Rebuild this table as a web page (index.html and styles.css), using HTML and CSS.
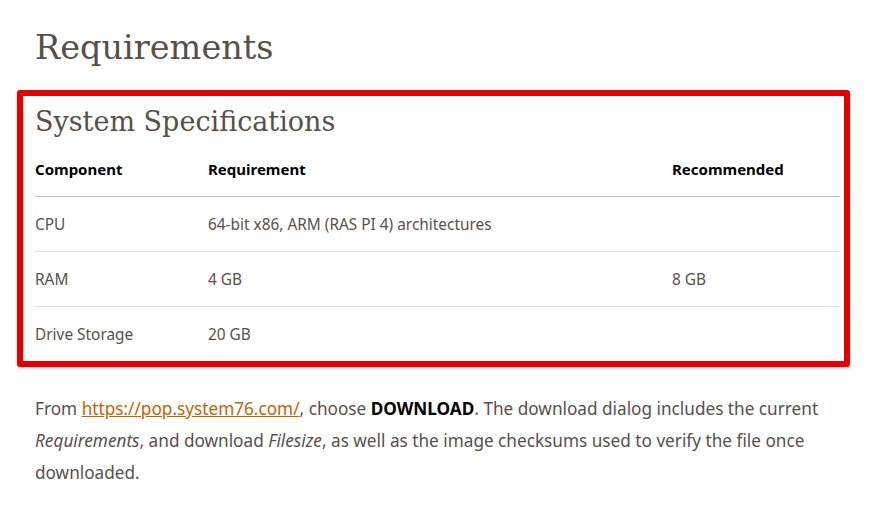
FILE: index.html
```html
<!DOCTYPE html>
<html>
<head>
<meta charset="utf-8">
<link rel="stylesheet" href="styles.css">
</head>
<body>
<main class="page">
  <h1 class="title">Requirements</h1>
  <section class="spec-box">
    <h2 class="subtitle">System Specifications</h2>
    <table class="spec-table">
      <thead>
        <tr><th class="c1">Component</th><th class="c2">Requirement</th><th class="c3">Recommended</th></tr>
      </thead>
      <tbody>
        <tr><td>CPU</td><td>64-bit x86, ARM (RAS PI 4) architectures</td><td></td></tr>
        <tr><td>RAM</td><td>4 GB</td><td>8 GB</td></tr>
        <tr class="last"><td>Drive Storage</td><td>20 GB</td><td></td></tr>
      </tbody>
    </table>
  </section>
  <p class="text">From <a href="#" class="link">https://pop.system76.com/</a>, choose <strong>DOWNLOAD</strong>. The download dialog includes the current <em>Requirements</em>, and download <em>Filesize</em>, as well as the image checksums used to verify the file once downloaded.</p>
</main>
</body>
</html>
```

FILE: styles.css
```css
html, body {
  margin: 0;
  padding: 0;
  background: #ffffff;
}
.page {
  padding: 24px 0 0 35px;
  width: 805px;
  color: #574f4a;
  font-family: "Noto Sans", "Open Sans", sans-serif;
}
.title {
  font-family: "DejaVu Serif", serif;
  font-weight: normal;
  font-size: 33.5px;
  line-height: 48px;
  margin: 0 0 18px 0;
  color: #574f4a;
}
.spec-box {
  margin-left: -18px;
  width: 805px;
  border: 6px solid #e50000;
  border-radius: 3px;
  box-shadow: 0 1px 3px rgba(0,0,0,0.25);
  padding: 6px 4px 0 12px;
}
.subtitle {
  font-family: "DejaVu Serif", serif;
  font-weight: normal;
  font-size: 27px;
  line-height: 40px;
  margin: 0;
  color: #574f4a;
}
.spec-table {
  width: 805px;
  border-collapse: collapse;
  font-size: 15.4px;
}
.spec-table th {
  text-align: left;
  color: #000;
  font-weight: bold;
  font-size: 15px;
  height: 54px;
  padding: 0;
  border-bottom: 1px solid #bcbcbc;
}
.c1 { width: 173px; }
.c2 { width: 464px; }
.spec-table td {
  height: 54px;
  padding: 0;
  border-bottom: 1px solid #e2e2e2;
}
.spec-table tr.last td {
  border-bottom: none;
}
.text {
  margin: 26px 0 0 0;
  font-size: 17.2px;
  line-height: 32px;
}
.link {
  color: #c26200;
}
.text strong {
  color: #000;
}
```
